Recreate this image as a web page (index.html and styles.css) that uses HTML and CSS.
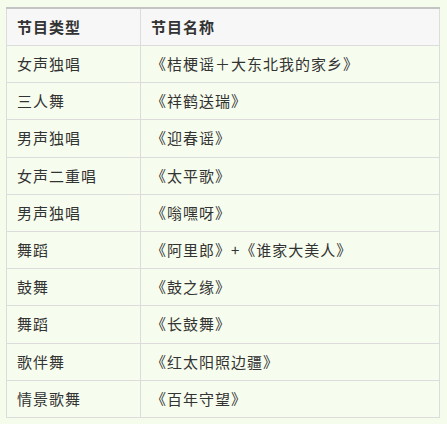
FILE: index.html
```html
<!DOCTYPE html>
<html lang="zh">
<head>
<meta charset="utf-8">
<link rel="stylesheet" href="styles.css">
</head>
<body>
<table class="program">
  <thead>
    <tr><th class="type">节目类型</th><th>节目名称</th></tr>
  </thead>
  <tbody>
    <tr><td>女声独唱</td><td>《桔梗谣＋大东北我的家乡》</td></tr>
    <tr><td>三人舞</td><td>《祥鹤送瑞》</td></tr>
    <tr><td>男声独唱</td><td>《迎春谣》</td></tr>
    <tr><td>女声二重唱</td><td>《太平歌》</td></tr>
    <tr><td>男声独唱</td><td>《嗡嘿呀》</td></tr>
    <tr><td>舞蹈</td><td>《阿里郎》+《谁家大美人》</td></tr>
    <tr><td>鼓舞</td><td>《鼓之缘》</td></tr>
    <tr><td>舞蹈</td><td>《长鼓舞》</td></tr>
    <tr><td>歌伴舞</td><td>《红太阳照边疆》</td></tr>
    <tr><td>情景歌舞</td><td>《百年守望》</td></tr>
  </tbody>
</table>
</body>
</html>
```
FILE: styles.css
```css
html, body {
  margin: 0;
  padding: 0;
  background: #f6fcec;
}
body {
  padding: 7px 0 0 6px;
  font-family: "Noto Sans CJK SC", "Noto Sans", sans-serif;
  color: #333;
}
.program {
  width: 434px;
  border-collapse: collapse;
  border-top: 2px solid #c4c4c4;
  font-size: 15px;
  letter-spacing: 1px;
}
.program th, .program td {
  border: 1px solid #dcdcdc;
  text-align: left;
  padding: 0 10px;
  height: 36.2px;
  line-height: 20px;
}
.program thead th {
  background: #f7f7f7;
  font-weight: bold;
  border-top: 2px solid #c4c4c4;
  height: 36px;
}
.program .type {
  width: 113px;
}
.program td {
  background: #f7fdee;
}
```
